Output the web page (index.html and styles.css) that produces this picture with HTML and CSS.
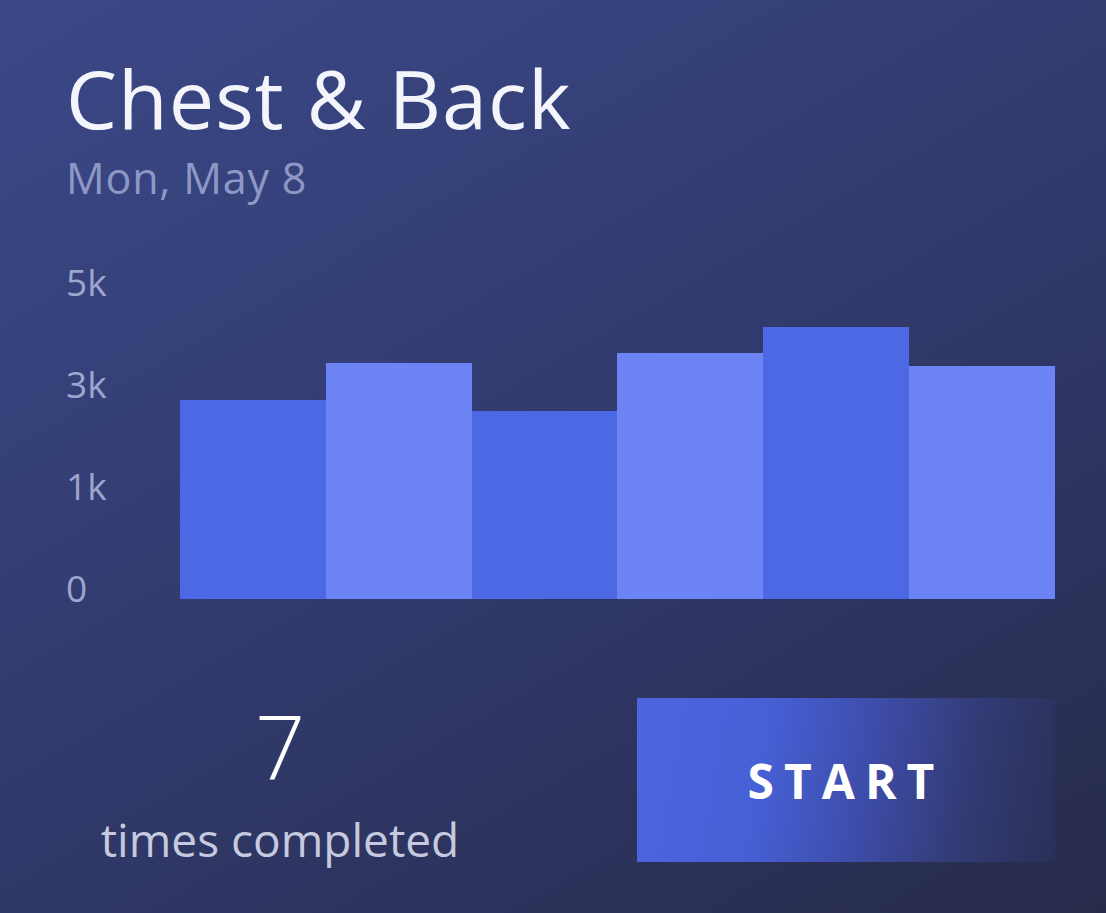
FILE: index.html
```html
<!DOCTYPE html>
<html>
<head>
<meta charset="utf-8">
<link rel="stylesheet" href="styles.css">
</head>
<body>
<div class="card">
  <div class="head">
    <div class="title">Chest &amp; Back</div>
    <div class="date">Mon, May 8</div>
  </div>
  <div class="chart">
    <div class="axis">
      <span>5k</span>
      <span>3k</span>
      <span>1k</span>
      <span>0</span>
    </div>
    <div class="bars">
      <div class="bar dark" style="height:199px"></div>
      <div class="bar light" style="height:236px"></div>
      <div class="bar dark" style="height:188px"></div>
      <div class="bar light" style="height:246px"></div>
      <div class="bar dark" style="height:272px"></div>
      <div class="bar light" style="height:233px"></div>
    </div>
  </div>
  <div class="footer">
    <div class="stat">
      <div class="count">7</div>
      <div class="label">times completed</div>
    </div>
    <button class="start">START</button>
  </div>
</div>
</body>
</html>
```
FILE: styles.css
```css
html, body {
  margin: 0;
  padding: 0;
}
body {
  width: 1106px;
  height: 913px;
  overflow: hidden;
  font-family: "Open Sans", "Noto Sans", sans-serif;
}
.card {
  width: 1106px;
  height: 913px;
  box-sizing: border-box;
  padding: 50px 51px 0 66px;
  background: linear-gradient(150deg, #3b4887 0%, #343f76 35%, #2d3460 70%, #272c4b 100%);
  display: flex;
  flex-direction: column;
  color: #fff;
}
.title {
  font-size: 81px;
  line-height: 96px;
  font-weight: 400;
  letter-spacing: 1px;
  color: #f4f5fb;
}
.date {
  font-size: 43px;
  line-height: 50px;
  margin-top: 7px;
  letter-spacing: 0.8px;
  color: #8e98c6;
}
.chart {
  display: flex;
  align-items: flex-start;
  margin-top: 54px;
  height: 342px;
}
.axis {
  width: 114px;
  height: 346px;
  margin-top: 5px;
  flex-shrink: 0;
  display: flex;
  flex-direction: column;
  justify-content: space-between;
  font-size: 37px;
  line-height: 40px;
  color: #9ea6cf;
}
.bars {
  flex: 1;
  height: 100%;
  display: flex;
  align-items: flex-end;
}
.bar {
  flex: 1;
}
.bar.dark {
  background: #4c68e5;
}
.bar.light {
  background: #6c83f4;
}
.footer {
  display: flex;
  align-items: flex-start;
  margin-top: 99px;
}
.stat {
  width: 428px;
  display: flex;
  flex-direction: column;
  align-items: center;
}
.count {
  font-size: 88px;
  line-height: 88px;
  font-weight: 300;
  color: #fff;
  margin-top: 3px;
}
.label {
  font-size: 46px;
  line-height: 50px;
  color: #c6cade;
  margin-top: 25px;
}
.start {
  margin-left: auto;
  width: 418px;
  height: 164px;
  border: 0;
  padding: 0;
  font-family: "Open Sans", "Noto Sans", sans-serif;
  font-weight: 700;
  font-size: 48px;
  letter-spacing: 10px;
  color: #fff;
  background: linear-gradient(100deg, #4b66df 0%, #4660d6 30%, #3d4ca8 55%, #323b74 78%, #2a3057 100%);
}
```
